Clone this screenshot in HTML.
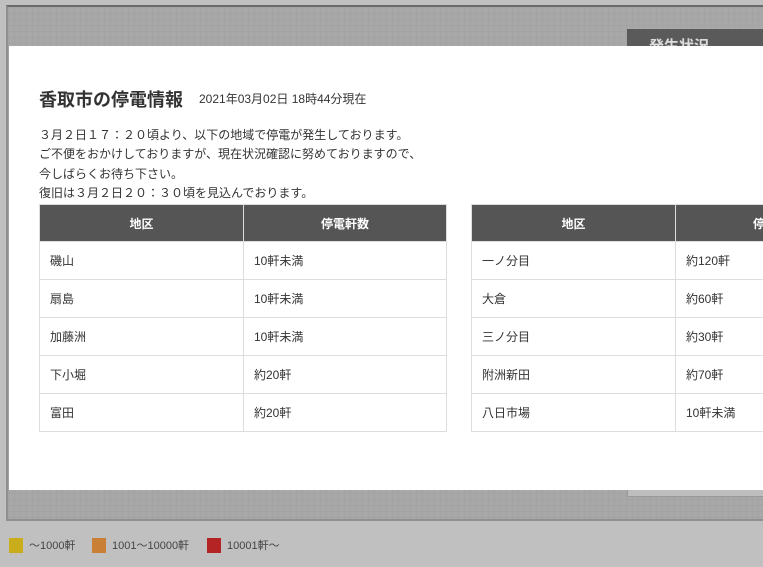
<!DOCTYPE html>
<html><head><meta charset="utf-8"><style>
*{margin:0;padding:0;box-sizing:border-box}
body{width:763px;height:567px;overflow:hidden;background:#c0c0c0;font-family:"Liberation Sans","Noto Sans CJK JP",sans-serif;color:#333;position:relative}
.map{position:absolute;left:6px;top:5px;width:770px;height:516px;background:#a8a8a8;border:2px solid #8f8f8f;border-top:2px solid #6a6a6a;
background-image:linear-gradient(#a3a3a3 1px,transparent 1px),linear-gradient(90deg,#a3a3a3 1px,transparent 1px);background-size:6px 6px}
.side{position:absolute;left:627px;top:29px;width:140px;height:20px;background:#5a5a5a;color:#ddd;font-weight:bold;font-size:15px;padding:6px 0 0 22px;overflow:hidden}
.sidebox{position:absolute;left:627px;top:480px;width:140px;height:17px;background:#bdbdbd;border:1px solid #999}
.modal{position:absolute;left:9px;top:46px;width:760px;height:444px;background:#fff;overflow:hidden}
h1{position:absolute;left:30px;top:40px;font-size:18px;font-weight:bold;color:#333}
.date{position:absolute;left:190px;top:44px;font-size:12px;color:#333}
.msg{position:absolute;left:30px;top:80px;font-size:12px;line-height:19.3px;color:#333}
table{position:absolute;top:158px;border-collapse:collapse;font-size:12px}
td,th{border:1px solid #ddd;height:38px;padding:0 10px;text-align:left;font-weight:normal}
th{background:#555;color:#fff;font-weight:bold;text-align:center;height:37px;border-color:#ddd}
.leg{position:absolute;top:537px;font-size:11px;color:#444;display:flex;align-items:center}
.leg i{display:inline-block;width:14px;height:15px;margin-right:6px}
</style></head><body>
<div class="map"></div>
<div class="side">発生状況</div>
<div class="sidebox"></div>
<div class="modal">
<h1>香取市の停電情報</h1>
<div class="date">2021年03月02日 18時44分現在</div>
<div class="msg">３月２日１７：２０頃より、以下の地域で停電が発生しております。<br>ご不便をおかけしておりますが、現在状況確認に努めておりますので、<br>今しばらくお待ち下さい。<br>復旧は３月２日２０：３０頃を見込んでおります。</div>
<table style="left:30px;width:408px"><tr><th style="width:204px">地区</th><th>停電軒数</th></tr>
<tr><td>磯山</td><td>10軒未満</td></tr><tr><td>扇島</td><td>10軒未満</td></tr><tr><td>加藤洲</td><td>10軒未満</td></tr><tr><td>下小堀</td><td>約20軒</td></tr><tr><td>富田</td><td>約20軒</td></tr></table>
<table style="left:462px;width:408px"><tr><th style="width:204px">地区</th><th>停電軒数</th></tr>
<tr><td>一ノ分目</td><td>約120軒</td></tr><tr><td>大倉</td><td>約60軒</td></tr><tr><td>三ノ分目</td><td>約30軒</td></tr><tr><td>附洲新田</td><td>約70軒</td></tr><tr><td>八日市場</td><td>10軒未満</td></tr></table>
</div>
<div class="leg" style="left:9px"><i style="background:#c9ac1a"></i>～1000軒</div>
<div class="leg" style="left:92px"><i style="background:#c97f36"></i>1001～10000軒</div>
<div class="leg" style="left:207px"><i style="background:#b52424"></i>10001軒～</div>
</body></html>
